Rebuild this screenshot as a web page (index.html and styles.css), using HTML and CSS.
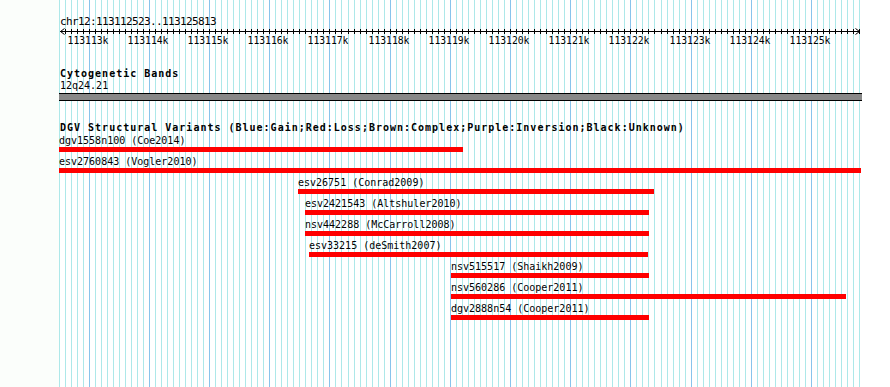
FILE: index.html
```html
<!DOCTYPE html>
<html lang="en">
<head>
    <meta charset="UTF-8">
    <meta name="viewport" content="width=device-width, initial-scale=1.0">
    <title>chr12:113112523..113125813</title>
    <link rel="stylesheet" href="styles.css">
</head>
<body>
    <div class="browser">
        <div class="label-strip"></div>
        <svg class="guidelines" id="guidelines" width="890" height="387"></svg>

        <div class="tracks">
            <div class="ruler-track">
                <div class="position">chr12:113112523..113125813</div>
                <svg class="ruler" id="ruler" width="890" height="40">
                    <rect class="axis" x="60" y="3" width="800" height="1"></rect>
                    <polyline class="arrow" points="64.5,0.5 60.5,3.5 64.5,6.5"></polyline>
                    <polyline class="arrow" points="855.5,0.5 859.5,3.5 855.5,6.5"></polyline>
                </svg>
            </div>

            <div class="cyto-track">
                <div class="track-title">Cytogenetic Bands</div>
                <div class="band-name">12q24.21</div>
                <div class="band"></div>
            </div>

            <div class="dgv-track">
                <div class="track-title">DGV Structural Variants (Blue:Gain;Red:Loss;Brown:Complex;Purple:Inversion;Black:Unknown)</div>

                <div class="feature" style="margin-left:59px;width:404px">
                    <div class="feature-label">dgv1558n100 (Coe2014)</div>
                    <div class="feature-bar"></div>
                </div>
                <div class="feature" style="margin-left:59px;width:802px">
                    <div class="feature-label">esv2760843 (Vogler2010)</div>
                    <div class="feature-bar"></div>
                </div>
                <div class="feature" style="margin-left:298px;width:356px">
                    <div class="feature-label">esv26751 (Conrad2009)</div>
                    <div class="feature-bar"></div>
                </div>
                <div class="feature" style="margin-left:305px;width:344px">
                    <div class="feature-label">esv2421543 (Altshuler2010)</div>
                    <div class="feature-bar"></div>
                </div>
                <div class="feature" style="margin-left:305px;width:344px">
                    <div class="feature-label">nsv442288 (McCarroll2008)</div>
                    <div class="feature-bar"></div>
                </div>
                <div class="feature" style="margin-left:309px;width:339px">
                    <div class="feature-label">esv33215 (deSmith2007)</div>
                    <div class="feature-bar"></div>
                </div>
                <div class="feature" style="margin-left:451px;width:198px">
                    <div class="feature-label">nsv515517 (Shaikh2009)</div>
                    <div class="feature-bar"></div>
                </div>
                <div class="feature" style="margin-left:451px;width:395px">
                    <div class="feature-label">nsv560286 (Cooper2011)</div>
                    <div class="feature-bar"></div>
                </div>
                <div class="feature" style="margin-left:451px;width:198px">
                    <div class="feature-label">dgv2888n54 (Cooper2011)</div>
                    <div class="feature-bar"></div>
                </div>
            </div>
        </div>
    </div>

    <script src="script.js"></script>
</body>
</html>
```

FILE: styles.css
```css
/* Genome browser track image */
body {
    margin: 0;
    background: #fff;
    color: #000;
    font-family: "DejaVu Sans Mono", "Liberation Mono", monospace;
}

.browser {
    position: relative;
    width: 890px;
    height: 387px;
    overflow: hidden;
}

/* faint strip where the side labels would go */
.label-strip {
    position: absolute;
    left: 0;
    top: 0;
    width: 59px;
    height: 100%;
    background: #fbfefb;
}

.guidelines {
    position: absolute;
    left: 0;
    top: 0;
}

.guidelines .minor {
    fill: #ade8e9;
}

.guidelines .major {
    fill: #88c4ec;
}

.tracks {
    position: relative;
}

/* ruler */
.position {
    padding: 16px 0 0 60px;
    font-size: 11px;
    line-height: 12px;
    letter-spacing: -0.62px;
}

.ruler {
    display: block;
}

.ruler .axis,
.ruler .tick {
    fill: #000;
}

.ruler .arrow {
    fill: none;
    stroke: #000;
    stroke-width: 1;
}

.ruler .tick-label {
    font-family: "DejaVu Sans Mono", monospace;
    font-size: 9.7px;
    fill: #000;
}

/* track titles */
.track-title {
    padding-left: 60px;
    font-size: 10px;
    font-weight: bold;
    line-height: 11px;
    letter-spacing: 1px;
    white-space: nowrap;
}

/* cytogenetic bands */
.band-name {
    padding-left: 60px;
    font-size: 10px;
    line-height: 13px;
}

.band {
    margin: 1px 0 0 59px;
    width: 803px;
    height: 6px;
    background: #888;
    border-top: 1px solid #000;
    border-bottom: 1px solid #000;
}

/* DGV variants */
.dgv-track {
    margin-top: 21px;
}

.dgv-track .track-title {
    margin-bottom: 1px;
}

.feature {
    margin-bottom: 3px;
}

.feature-label {
    font-size: 10px;
    line-height: 13px;
    white-space: nowrap;
}

.feature-bar {
    height: 5px;
    background: #f00;
}
```

FILE: script.js
```js
// guidelines and ruler ticks every 100 bp, darker line every 1 kb
const NS = 'http://www.w3.org/2000/svg';
const pxPerBp = 800 / 13291;
const firstX = 58.6;
const step = 100 * pxPerBp;

const grid = document.getElementById('guidelines');
const ruler = document.getElementById('ruler');

for (let i = 0; i <= 133; i++) {
    const x = Math.round(firstX + i * step);
    const isMajor = i % 10 === 5;

    const line = document.createElementNS(NS, 'rect');
    line.setAttribute('x', x);
    line.setAttribute('y', 0);
    line.setAttribute('width', 1);
    line.setAttribute('height', 387);
    line.setAttribute('class', isMajor ? 'major' : 'minor');
    grid.appendChild(line);

    if (i > 0) {
        const tick = document.createElementNS(NS, 'rect');
        tick.setAttribute('x', x);
        tick.setAttribute('y', 1);
        tick.setAttribute('width', 1);
        tick.setAttribute('height', 5);
        tick.setAttribute('class', 'tick');
        ruler.appendChild(tick);
    }

    if (isMajor) {
        const label = document.createElementNS(NS, 'text');
        label.setAttribute('x', x - 1);
        label.setAttribute('y', 15.5);
        label.setAttribute('text-anchor', 'middle');
        label.setAttribute('class', 'tick-label');
        label.textContent = (113113 + (i - 5) / 10) + 'k';
        ruler.appendChild(label);
    }
}
```
